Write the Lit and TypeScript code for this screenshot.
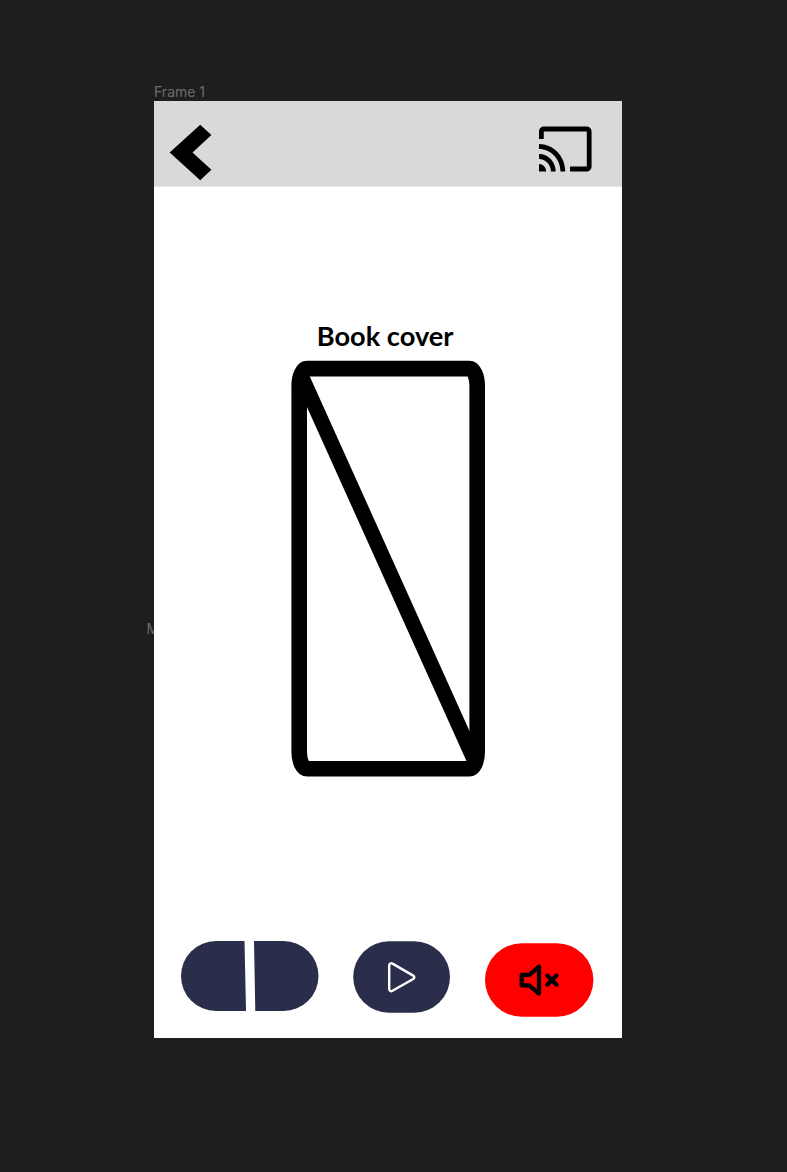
import { LitElement, html, css } from "lit";
import { customElement } from "lit/decorators.js";

@customElement("app-root")
export class AppRoot extends LitElement {
  static styles = css`
    :host {
      display: block;
      height: 1172px;
      background: #1e1e1e;
      overflow: hidden;
    }
    * { box-sizing: border-box; }
    svg { display: block; flex: none; }
    .canvas {
      display: grid;
      grid-template-columns: 154px 468.3px 1fr;
      grid-template-rows: 101.2px 936.8px 1fr;
      height: 100%;
    }
    .label {
      font: 400 14px/18px Inter, sans-serif;
      color: #6c6c6c;
      white-space: nowrap;
    }
    .frame-label { grid-column: 2; grid-row: 1; align-self: end; }
    .gutter { grid-column: 1; grid-row: 2; overflow: hidden; padding: 519px 0 0 146.6px; }
    .screen {
      grid-column: 2;
      grid-row: 2;
      background: #fff;
      display: flex;
      flex-direction: column;
    }
    .bar {
      height: 85.2px;
      background: #d9d9d9;
      display: flex;
      justify-content: space-between;
      align-items: flex-start;
      padding: 22.8px 30px 0 15px;
      border-bottom: 1px solid #e9e9e9;
    }
    .bar { height: 85.8px; }
    .cast { margin-top: 2px; }
    .book { display: flex; flex-direction: column; align-items: center; padding-top: 133px; }
    h1 { margin: 0; font: 700 27.2px/32px Lato, sans-serif; color: #000; padding-right: 6px; }
    .cover { margin-top: 8px; }
    .controls { display: flex; align-items: flex-start; padding: 162px 0 0 26px; }
    .play { margin-left: 33px; }
    .mute { margin-left: 33px; }
  `;

  render() {
    return html`
      <div class="canvas">
        <div class="label frame-label">Frame 1</div>
        <div class="label gutter">M</div>
        <main class="screen">
          <header class="bar">
            <svg width="44" height="58" viewBox="169 124 44 58" role="img" aria-label="Back">
              <path d="M169.7 152.4 200.2 124.7 211.4 135 192.5 152.4 211.4 169.8 200.2 180.2Z" />
            </svg>
            <svg class="cast" width="54" height="46" viewBox="538.3 126 54 46" role="img" aria-label="Cast">
              <path transform="translate(536.9 118.9) scale(2.39 2.5)"
                d="M21 3H3c-1.1 0-2 .9-2 2v3h2V5h18v14h-7v2h7c1.1 0 2-.9 2-2V5c0-1.1-.9-2-2-2zM1 18v3h3c0-1.66-1.34-3-3-3zm0-4v2c2.76 0 5 2.24 5 5h2c0-3.87-3.13-7-7-7zm0-4v2c4.97 0 9 4.03 9 9h2c0-6.08-4.93-11-11-11z" />
            </svg>
          </header>
          <section class="book">
            <h1>Book cover</h1>
            <svg class="cover" width="196" height="418" viewBox="290 360 196 418" fill="none" stroke="#000">
              <rect x="299.2" y="368.6" width="178" height="400.2" rx="8" ry="17" stroke-width="15.6" />
              <path d="M301 375.3 475 761.5" stroke-width="15.1" />
            </svg>
          </section>
          <nav class="controls">
            <svg width="139" height="72" viewBox="180 940 139 72" fill="#2b2e4a">
              <path d="M244.5 941H216a35 35 0 0 0 0 70h30Z" />
              <path d="M254 941h29.5a35 35 0 0 1 0 70h-28.2Z" />
            </svg>
            <svg class="play" width="99" height="75" viewBox="352 940 99 75" role="img" aria-label="Play">
              <rect x="353.2" y="941.2" width="96.8" height="71.6" rx="35.8" fill="#2b2e4a" />
              <path d="M389.2 965.4c0-1.9 1.7-2.7 3.3-1.8L413.2 975.6c1.5.9 1.5 2.5 0 3.4L392.5 990.8c-1.6.9-3.3.1-3.3-1.8Z"
                fill="none" stroke="#fff" stroke-width="2.4" />
            </svg>
            <svg class="mute" width="111" height="79" viewBox="484 940 111 79" role="img" aria-label="Mute">
              <rect x="485" y="943.2" width="108.4" height="73.6" rx="36.8" fill="#f00" />
              <g fill="none" stroke="#000" stroke-width="4.2" stroke-linejoin="round" stroke-linecap="round">
                <path d="M521.7 974.8H529.3L539 966.5V993.7L529.3 985.4H521.7Z" />
                <path d="M547.2 975.5 556.5 984.7M556.5 975.5 547.2 984.7" />
              </g>
            </svg>
          </nav>
        </main>
      </div>
    `;
  }
}
